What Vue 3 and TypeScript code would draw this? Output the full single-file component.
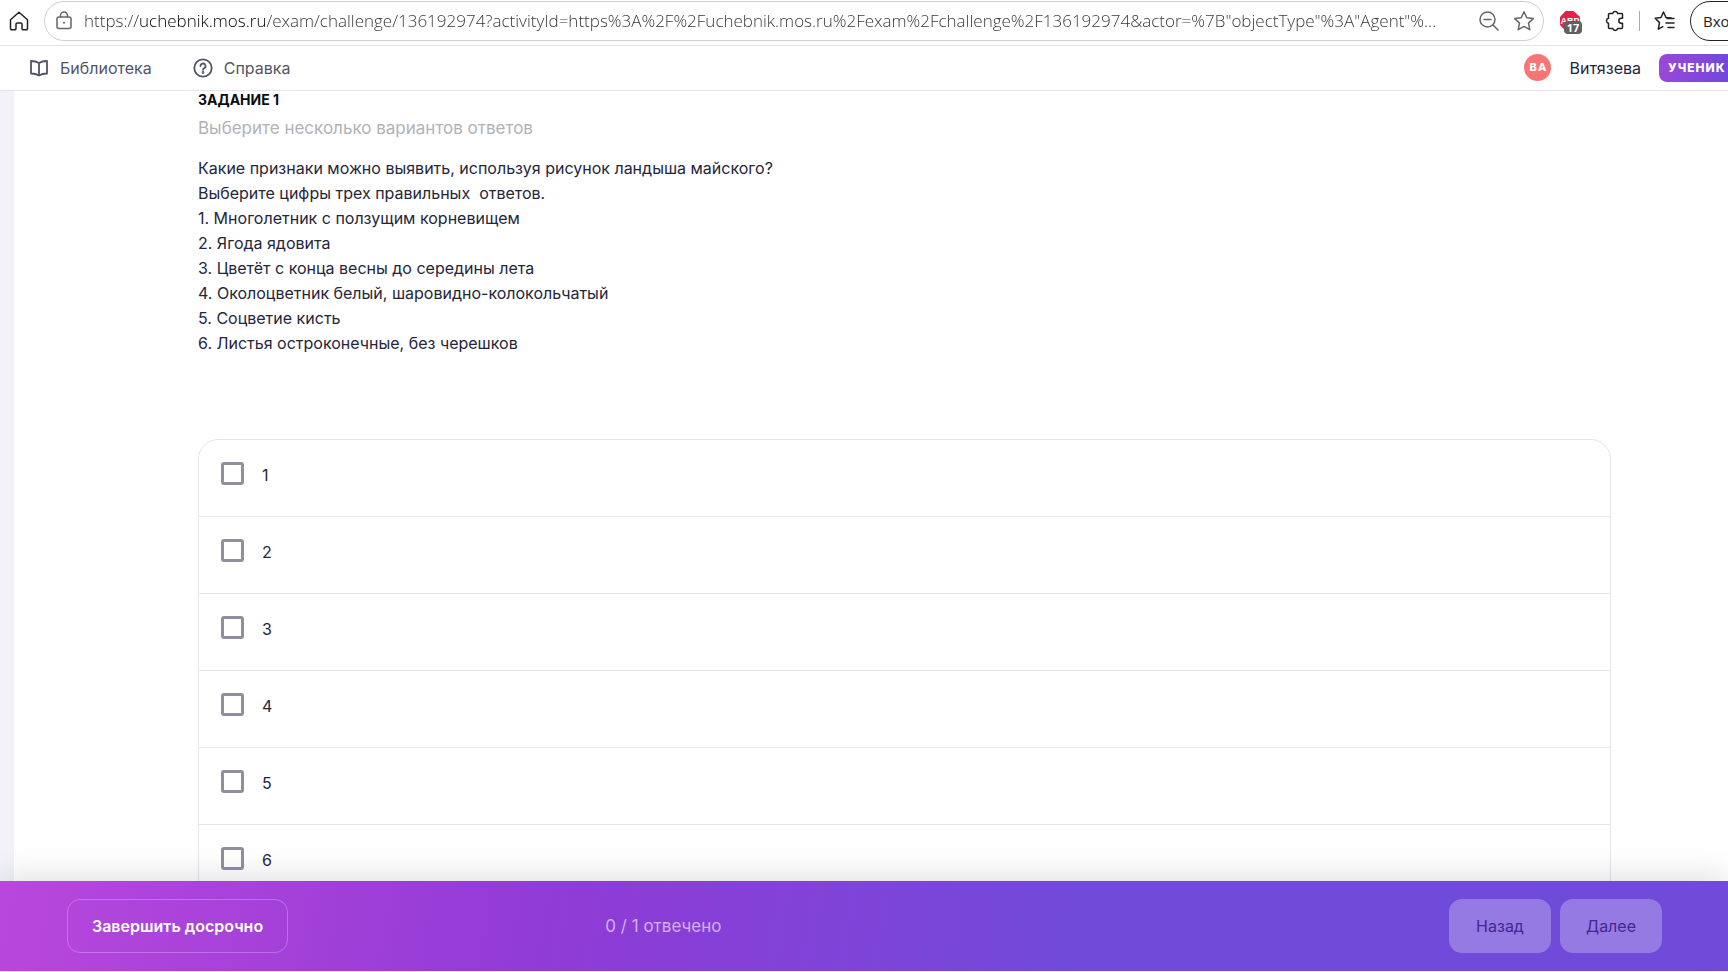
<script setup lang="ts">
import { ref } from 'vue'

const address = ref(
  'https://uchebnik.mos.ru/exam/challenge/136192974?activityId=https%3A%2F%2Fuchebnik.mos.ru%2Fexam%2Fchallenge%2F136192974&actor=%7B"objectType"%3A"Agent"%...',
)

const statement: string[] = [
  'Какие признаки можно выявить, используя рисунок ландыша майского?',
  'Выберите цифры трех правильных\u00a0 ответов.',
  '1. Многолетник с ползущим корневищем',
  '2. Ягода ядовита',
  '3. Цветёт с конца весны до середины лета',
  '4. Околоцветник белый, шаровидно-колокольчатый',
  '5. Соцветие кисть',
  '6. Листья остроконечные, без черешков',
]

const options: string[] = ['1', '2', '3', '4', '5', '6']
const selected = ref<string[]>([])
</script>

<template>
  <div class="window">
    <div class="toolbar">
      <button class="tool home" type="button" aria-label="Домой">
        <svg width="20" height="20" viewBox="0 0 20 20"><path d="M1.5 8.800 10 1.200l8.500 7.600v8.700a1.200 1.200 0 0 1-1.200 1.200h-3.100a1.200 1.200 0 0 1-1.200-1.200v-4.200a1.300 1.300 0 0 0-1.300-1.300H8.300A1.300 1.300 0 0 0 7 13.300v4.200a1.200 1.200 0 0 1-1.200 1.200H2.700a1.200 1.200 0 0 1-1.200-1.200z" /></svg>
      </button>
      <div class="address">
        <svg class="lock" width="18" height="20" viewBox="0 0 18 20"><rect x="2" y="6" width="14" height="11.500" rx="2" /><path d="M5.500 6V4.500a3.500 3.500 0 0 1 7 0V6" /><circle cx="9" cy="11.800" r="1" class="dot" /></svg>
        <input v-model="address" class="url" type="text" aria-label="Адрес страницы" spellcheck="false" />
        <button class="tool zoom" type="button" aria-label="Масштаб">
          <svg width="20" height="20" viewBox="0 0 20 20"><circle cx="8.500" cy="8.500" r="7.500" /><path d="M5 8.500h7M14 14l5 5" /></svg>
        </button>
        <button class="tool star" type="button" aria-label="В избранное">
          <svg width="22" height="22" viewBox="0 0 22 22"><path d="m11 1.800 2.800 6 6.500.8-4.800 4.500 1.300 6.600-5.800-3.300-5.800 3.300 1.300-6.600L1.700 8.600l6.500-.8z" /></svg>
        </button>
      </div>
      <button class="tool blocker" type="button" aria-label="Блокировщик рекламы">
        <svg width="22" height="22" viewBox="0 0 22 22"><path class="sign" d="M6.500 1h8L21 7v8l-6 6H6.500L1 15V7z" /><text x="11" y="14" text-anchor="middle">ABP</text></svg>
        <span class="count">17</span>
      </button>
      <button class="tool puzzle" type="button" aria-label="Расширения">
        <svg width="20" height="22" viewBox="0 0 20 22"><path d="M4.500 3.500h3.200a2.600 2.600 0 0 1 5 0h3.800q1 0 1 1v3.800h-1.200a2.400 2.400 0 0 0 0 4.900h1.200v4.300q0 1-1 1h-3.800a2.600 2.600 0 0 1-5 0H4.500q-1 0-1-1v-4.300a2.500 2.500 0 0 1 0-4.900V4.500q0-1 1-1z" /></svg>
      </button>
      <span class="divider"></span>
      <button class="tool favourites" type="button" aria-label="Избранное">
        <svg width="22" height="22" viewBox="0 0 22 22"><path d="M12 7.500 9.500 2 7 7.500l-5.800.8 4.300 4.300-1.200 6.600 4.500-2.500M12 7.500l5.300.5M13 8.500h7M12 13h8M14 17.500h6" /></svg>
      </button>
      <button class="signin" type="button">Вход</button>
    </div>

    <header class="header">
      <nav class="nav">
        <a class="link" href="#library">
          <svg width="20" height="20" viewBox="0 0 20 20"><path d="M10 5C7.500 3.400 5 3 2 3v12.500c3 0 5.500.4 8 2 2.500-1.600 5-2 8-2V3c-3 0-5.500.4-8 2zM10 5v12.500" /></svg>
          <span>Библиотека</span>
        </a>
        <a class="link" href="#help">
          <svg width="20" height="20" viewBox="0 0 20 20"><circle cx="10" cy="10" r="8.700" /><path d="M7.500 8a2.500 2.500 0 1 1 3.700 2.200c-.8.500-1.200.8-1.200 1.600" /><circle cx="10" cy="14.500" r=".5" /></svg>
          <span>Справка</span>
        </a>
      </nav>
      <div class="user">
        <span class="avatar">ВА</span>
        <span class="name">Витязева</span>
        <span class="role">УЧЕНИК</span>
      </div>
    </header>

    <main class="main">
      <section class="task">
        <h1 class="title">ЗАДАНИЕ 1</h1>
        <p class="hint">Выберите несколько вариантов ответов</p>
        <div class="statement">
          <p v-for="line in statement" :key="line">{{ line }}</p>
        </div>
        <div class="options" role="group" aria-label="Варианты ответов">
          <label v-for="option in options" :key="option" class="option">
            <input v-model="selected" type="checkbox" :value="option" />
            <span>{{ option }}</span>
          </label>
        </div>
      </section>
    </main>

    <footer class="footer">
      <div class="side"><button class="finish" type="button">Завершить досрочно</button></div>
      <span class="progress">0 / 1 отвечено</span>
      <div class="steps">
        <button class="step" type="button" disabled>Назад</button>
        <button class="step" type="button" disabled>Далее</button>
      </div>
    </footer>
  </div>
</template>

<style>
body {
  background: #fff;
  overflow: hidden;
}
</style>

<style scoped>
.window {
  display: flex;
  flex-direction: column;
  height: 100vh;
  padding-bottom: 1px;
  box-sizing: border-box;
  overflow: hidden;
  font-family: Inter, "Liberation Sans", sans-serif;
  font-size: 16px;
  color: #24263a;
}
button,
input {
  font: inherit;
  margin: 0;
}
svg {
  display: block;
  fill: none;
  stroke: currentColor;
  stroke-width: 1.5;
  stroke-linejoin: round;
  stroke-linecap: round;
}

.toolbar {
  display: flex;
  align-items: center;
  flex: none;
  height: 46px;
  padding: 0 0 4px 9px;
  box-sizing: border-box;
  border-bottom: 1px solid #e2e3e3;
  font-family: "Open Sans", "Noto Sans", sans-serif;
  white-space: nowrap;
}
.tool {
  flex: none;
  padding: 0;
  border: 0;
  background: none;
  color: #222;
}
.address {
  display: flex;
  align-items: center;
  flex: 1;
  min-width: 0;
  height: 40px;
  margin-left: 15px;
  padding: 0 8px 0 10px;
  box-sizing: border-box;
  border: 1px solid #cdd0ce;
  border-radius: 20px;
}
.lock {
  flex: none;
  color: #666;
}
.lock .dot {
  fill: currentColor;
  stroke: none;
}
.url {
  flex: 1;
  min-width: 0;
  height: 30px;
  margin-left: 11px;
  padding: 0;
  border: 0;
  outline: 0;
  font-size: 17px;
  font-weight: 300;
  color: transparent;
  background: linear-gradient(90deg, #333 56px, #000 56px, #000 182px, #333 182px);
  -webkit-background-clip: text;
  background-clip: text;
}
.zoom,
.star {
  color: #666;
}
.star {
  margin-left: 14px;
}
.blocker {
  position: relative;
  margin-left: 15px;
}
.blocker .sign {
  fill: #df2448;
  stroke: none;
}
.blocker text {
  font: 700 9px "Liberation Sans", sans-serif;
  fill: #fff;
  stroke: none;
}
.count {
  position: absolute;
  left: 5px;
  top: 11px;
  width: 18px;
  border-radius: 4px;
  background: #5f6160;
  color: #fff;
  font: 700 11px/13px "Open Sans", sans-serif;
  text-align: center;
}
.puzzle {
  margin-left: 24px;
}
.divider {
  flex: none;
  width: 1px;
  height: 20px;
  margin: 0 14px;
  background: #aaa;
}
.signin {
  flex: none;
  width: 80px;
  height: 40px;
  margin: 0 -42px 0 14px;
  padding: 0 0 0 12px;
  border: 1px solid #222;
  border-radius: 20px;
  background: #fff;
  color: #222;
  font-size: 15px;
  text-align: left;
}

.header {
  display: flex;
  align-items: center;
  justify-content: space-between;
  flex: none;
  height: 45px;
  padding: 0 0 1px 29px;
  box-sizing: border-box;
  border-bottom: 1px solid #e4e5ea;
}
.nav {
  display: flex;
  gap: 41px;
}
.link {
  display: flex;
  align-items: center;
  gap: 11px;
  color: #535466;
  text-decoration: none;
}
.link svg {
  stroke-width: 1.8;
}
.user {
  display: flex;
  align-items: center;
}
.avatar {
  width: 27px;
  padding-left: 1px;
  box-sizing: border-box;
  border-radius: 50%;
  background: #fb7474;
  color: #fff;
  font-size: 11px;
  font-weight: 800;
  letter-spacing: 1px;
  line-height: 27px;
  text-align: center;
}
.name {
  margin: 0 18px;
}
.role {
  width: 69px;
  padding-left: 9px;
  box-sizing: border-box;
  border-radius: 8px 0 0 8px;
  background: linear-gradient(100deg, #9c48d8, #7048dc);
  color: #fff;
  font-size: 12px;
  font-weight: 800;
  letter-spacing: 1px;
  line-height: 28px;
}

.main {
  flex: 1;
  min-height: 0;
  overflow: hidden;
  border-left: 14px solid #f2f2f8;
}
.task {
  padding: 0 117px 0 184px;
}
.title {
  margin: 0;
  font-size: 14px;
  font-weight: 700;
  line-height: 18px;
  color: #0b0b14;
}
.hint {
  margin: 7px 0 16px;
  font-size: 17px;
  line-height: 24px;
  color: #b1b2b8;
}
.statement p {
  margin: 0;
  line-height: 25px;
}
.options {
  margin-top: 83px;
  border: 1px solid #e5e6ea;
  border-radius: 20px;
}
.option {
  display: flex;
  align-items: flex-start;
  gap: 18px;
  height: 77px;
  padding: 22px 22px 0;
  box-sizing: border-box;
  line-height: 26px;
}
.option:first-child {
  height: 76px;
}
.option + .option {
  border-top: 1px solid #e5e6ea;
}
.option input {
  appearance: none;
  width: 23px;
  height: 23px;
  border: 3px solid #918f9d;
  border-radius: 3px;
  background: #fff;
}
.option input:checked {
  background: #704ada;
}

.footer {
  display: grid;
  grid-template-columns: 27fr 40fr 13fr;
  align-items: center;
  flex: none;
  height: 90px;
  padding: 0 66px 0 67px;
  box-sizing: border-box;
  position: relative;
  background: linear-gradient(100deg, #b947dc 0%, #903bd6 32%, #704ad9 63%, #704ad9 100%);
  box-shadow: 0 -4px 32px rgba(20, 20, 50, 0.14);
}
.finish,
.step {
  height: 54px;
  border-radius: 13px;
}
.finish {
  padding: 0 24px;
  border: 1px solid rgba(255, 255, 255, 0.25);
  background: none;
  color: #fff;
  font-weight: 600;
}
.progress {
  font-size: 17px;
  color: #d2b0ef;
}
.steps {
  display: flex;
  justify-content: flex-end;
  gap: 9px;
}
.step {
  min-width: 102px;
  padding: 0 26px;
  border: 0;
  background: #957ae3;
  color: #452790;
}
</style>
